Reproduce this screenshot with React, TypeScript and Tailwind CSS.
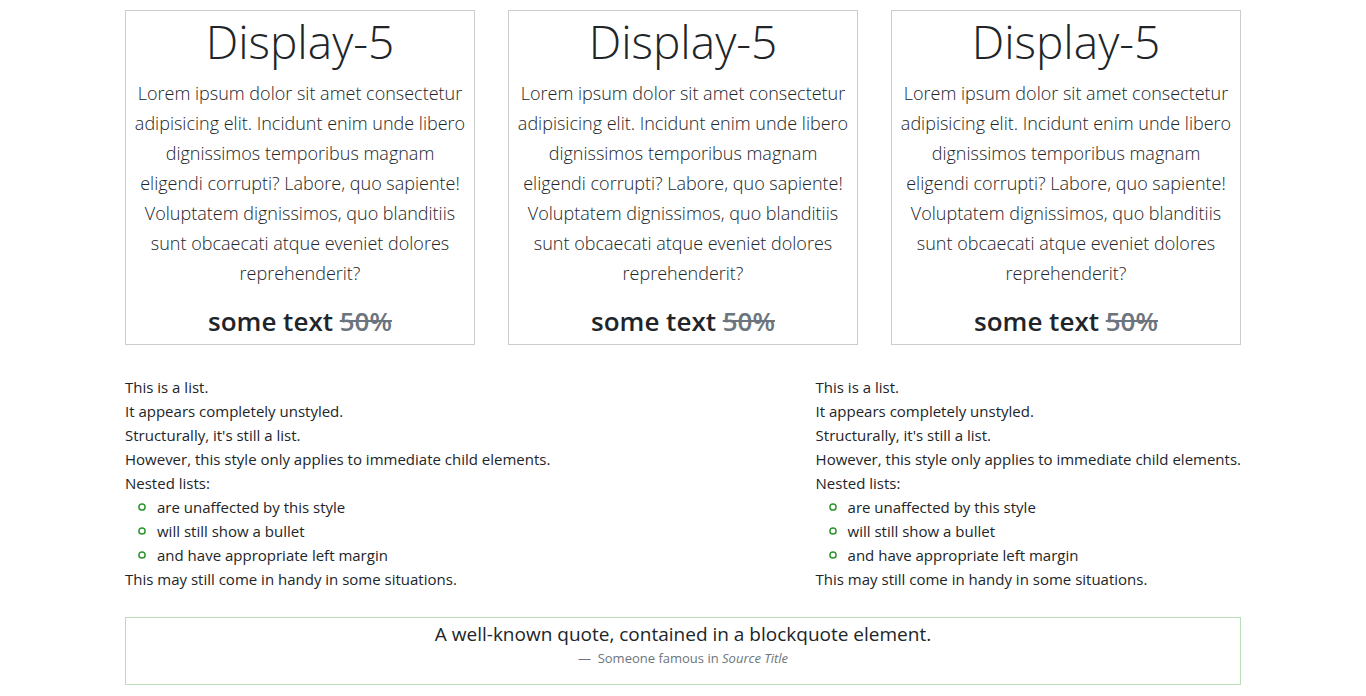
import React from 'react';

function Card() {
  return (
    <article className="border border-[#cccccc] text-center">
      <h1 className="mb-[7px] text-[46px] leading-[60px] font-light">Display-5</h1>
      <p className="mb-4 px-2 text-[18px] leading-[30px] font-light">
        Lorem ipsum dolor sit amet consectetur adipisicing elit. Incidunt enim unde libero dignissimos temporibus magnam eligendi corrupti? Labore, quo sapiente! Voluptatem dignissimos, quo blanditiis sunt obcaecati atque eveniet dolores reprehenderit?
      </p>
      <h3 className="mb-1.5 text-[26px] leading-[34px] font-semibold">
        some text <s className="text-[#6c757d]">50%</s>
      </h3>
    </article>
  );
}

const nestedItems = [
  'are unaffected by this style',
  'will still show a bullet',
  'and have appropriate left margin',
];

function Bullet() {
  return (
    <svg className="size-2 shrink-0" viewBox="0 0 8 8" fill="none" aria-hidden="true">
      <circle cx="4" cy="4" r="3.1" stroke="#2e962e" strokeWidth="1.5" />
    </svg>
  );
}

function List() {
  return (
    <ul className="text-[15px] leading-6">
      <li>This is a list.</li>
      <li>It appears completely unstyled.</li>
      <li>Structurally, it's still a list.</li>
      <li>However, this style only applies to immediate child elements.</li>
      <li>
        Nested lists:
        <ul className="pl-[13px]">
          {nestedItems.map((item) => (
            <li key={item} className="flex items-center gap-[11px]">
              <Bullet />
              {item}
            </li>
          ))}
        </ul>
      </li>
      <li>This may still come in handy in some situations.</li>
    </ul>
  );
}

export default function App() {
  return (
    <main className="mx-auto max-w-[1140px] px-3 pt-[10px] font-['Open_Sans','Noto_Sans',sans-serif] text-[#212529]">
      <section className="grid grid-cols-3 gap-[33px]">
        <Card />
        <Card />
        <Card />
      </section>
      <section className="mt-[30px] flex justify-between">
        <List />
        <List />
      </section>
      <figure className="mt-[26px] border border-[#b9dfb9] pb-[18px] text-center">
        <blockquote className="text-[19px] leading-8">A well-known quote, contained in a blockquote element.</blockquote>
        <figcaption className="text-[13px] leading-4 text-[#6c757d]">
          —&nbsp; Someone famous in <cite>Source Title</cite>
        </figcaption>
      </figure>
    </main>
  );
}
